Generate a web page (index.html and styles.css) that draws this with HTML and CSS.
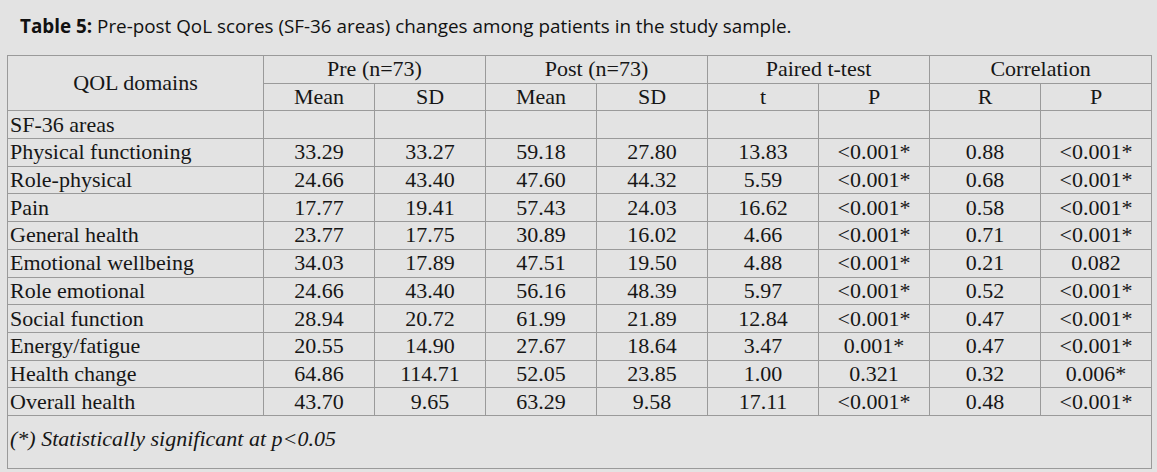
FILE: index.html
```html
<!DOCTYPE html>
<html>
<head>
<meta charset="utf-8">
<link rel="stylesheet" href="styles.css">
</head>
<body>
<div class="page">
  <p class="caption"><b>Table 5:</b> Pre-post QoL scores (SF-36 areas) changes among patients in the study sample.</p>
  <table class="data">
    <colgroup>
      <col class="c-first"><col class="c-num"><col class="c-num"><col class="c-num"><col class="c-num"><col class="c-num"><col class="c-num"><col class="c-num"><col class="c-num">
    </colgroup>
    <thead>
      <tr>
        <th rowspan="2" class="domain-head">QOL domains</th>
        <th colspan="2">Pre (n=73)</th>
        <th colspan="2">Post (n=73)</th>
        <th colspan="2">Paired t-test</th>
        <th colspan="2">Correlation</th>
      </tr>
      <tr>
        <th>Mean</th><th>SD</th><th>Mean</th><th>SD</th><th>t</th><th>P</th><th>R</th><th>P</th>
      </tr>
    </thead>
    <tbody>
      <tr><td class="label">SF-36 areas</td><td></td><td></td><td></td><td></td><td></td><td></td><td></td><td></td></tr>
      <tr><td class="label">Physical functioning</td><td>33.29</td><td>33.27</td><td>59.18</td><td>27.80</td><td>13.83</td><td>&lt;0.001*</td><td>0.88</td><td>&lt;0.001*</td></tr>
      <tr><td class="label">Role-physical</td><td>24.66</td><td>43.40</td><td>47.60</td><td>44.32</td><td>5.59</td><td>&lt;0.001*</td><td>0.68</td><td>&lt;0.001*</td></tr>
      <tr><td class="label">Pain</td><td>17.77</td><td>19.41</td><td>57.43</td><td>24.03</td><td>16.62</td><td>&lt;0.001*</td><td>0.58</td><td>&lt;0.001*</td></tr>
      <tr><td class="label">General health</td><td>23.77</td><td>17.75</td><td>30.89</td><td>16.02</td><td>4.66</td><td>&lt;0.001*</td><td>0.71</td><td>&lt;0.001*</td></tr>
      <tr><td class="label">Emotional wellbeing</td><td>34.03</td><td>17.89</td><td>47.51</td><td>19.50</td><td>4.88</td><td>&lt;0.001*</td><td>0.21</td><td>0.082</td></tr>
      <tr><td class="label">Role emotional</td><td>24.66</td><td>43.40</td><td>56.16</td><td>48.39</td><td>5.97</td><td>&lt;0.001*</td><td>0.52</td><td>&lt;0.001*</td></tr>
      <tr><td class="label">Social function</td><td>28.94</td><td>20.72</td><td>61.99</td><td>21.89</td><td>12.84</td><td>&lt;0.001*</td><td>0.47</td><td>&lt;0.001*</td></tr>
      <tr><td class="label">Energy/fatigue</td><td>20.55</td><td>14.90</td><td>27.67</td><td>18.64</td><td>3.47</td><td>0.001*</td><td>0.47</td><td>&lt;0.001*</td></tr>
      <tr><td class="label">Health change</td><td>64.86</td><td>114.71</td><td>52.05</td><td>23.85</td><td>1.00</td><td>0.321</td><td>0.32</td><td>0.006*</td></tr>
      <tr><td class="label">Overall health</td><td>43.70</td><td>9.65</td><td>63.29</td><td>9.58</td><td>17.11</td><td>&lt;0.001*</td><td>0.48</td><td>&lt;0.001*</td></tr>
      <tr class="foot"><td colspan="9" class="note">(*) Statistically significant at p&lt;0.05</td></tr>
    </tbody>
  </table>
</div>
</body>
</html>
```
FILE: styles.css
```css
html, body {
  margin: 0;
  padding: 0;
  background: #e3e3e3;
}
.page {
  width: 1157px;
  height: 472px;
  overflow: hidden;
  background: #e3e3e3;
}
.caption {
  margin: 0;
  padding: 13px 0 0 20px;
  height: 41px;
  box-sizing: border-box;
  font-family: "Open Sans", sans-serif;
  font-size: 18.85px;
  line-height: 26px;
  color: #111;
}
.caption b {
  font-weight: 700;
}
.data {
  margin-left: 7px;
  margin-top: 14px;
  border-collapse: collapse;
  table-layout: fixed;
  width: 1145px;
  font-family: "Liberation Serif", "Times New Roman", serif;
  font-size: 22px;
  color: #161616;
}
.c-first { width: 256px; }
.c-num { width: 111px; }
.data th, .data td {
  border: 1px solid #9a9a9a;
  height: 26.7px;
  padding: 0 2px;
  line-height: 24px;
  font-weight: normal;
  text-align: center;
  vertical-align: middle;
  white-space: nowrap;
}
.data td.label {
  text-align: left;
}
.data tr.foot td {
  height: 53px;
  text-align: left;
  font-style: italic;
  vertical-align: top;
  padding-top: 11px;
  box-sizing: border-box;
}
```
